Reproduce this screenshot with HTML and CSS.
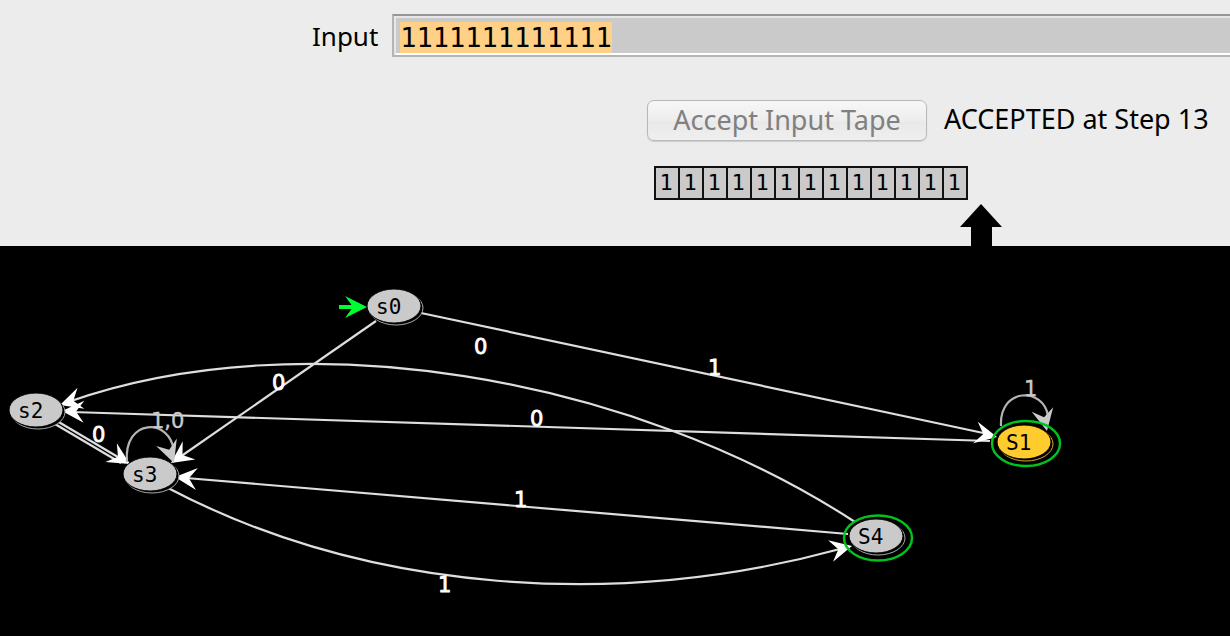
FILE: index.html
```html
<!DOCTYPE html>
<html lang="en">
<head>
<meta charset="utf-8">
<title>Automaton simulator</title>
<link rel="stylesheet" href="styles.css">
</head>
<body>
<main class="app">
  <section class="controls">
    <div class="input-row">
      <label for="tape-input">Input</label>
      <input id="tape-input" class="tape-input" type="text" value="1111111111111" spellcheck="false" autocomplete="off">
    </div>
    <div class="action-row">
      <button class="accept" type="button" disabled>Accept Input Tape</button>
      <output class="status" for="tape-input">ACCEPTED at Step 13</output>
    </div>
    <div class="tape-row">
      <ol class="tape">
        <li>1</li><li>1</li><li>1</li><li>1</li><li>1</li><li>1</li><li>1</li><li>1</li><li>1</li><li>1</li><li>1</li><li>1</li><li>1</li>
      </ol>
      <svg class="head" width="42" height="42" viewBox="0 0 42 42" aria-hidden="true"><path d="M21 0 42 23H32V42H11V23H0Z"/></svg>
    </div>
  </section>
  <section class="canvas">
    <svg class="graph" width="1230" height="390" viewBox="0 246 1230 390" role="img" aria-label="State diagram">
      <defs>
        <path id="tip" d="M0 0 L-22 -11 L-14 0 L-22 11 Z"/>
      </defs>
      <g class="edge">
        <path d="M421 313 988 434"/>
        <path d="M376 321 180 457"/>
        <path d="M990 441 72 412"/>
        <path d="M848 534 186 478"/>
        <path d="M855 522C630 375 300 320 68 402"/>
        <path d="M168 488C370 594 620 609 840 549"/>
        <path d="M57 421 123 460"/>
        <path d="M55 424 121 463"/>
      </g>
      <g class="tips">
        <use href="#tip" transform="translate(997 437) rotate(12)"/>
        <use href="#tip" transform="translate(171 463) rotate(145)"/>
        <use href="#tip" transform="translate(62 411) rotate(182)"/>
        <use href="#tip" transform="translate(175 477) rotate(185)"/>
        <use href="#tip" transform="translate(60 405) rotate(162)"/>
        <use href="#tip" transform="translate(852 546) rotate(-13)"/>
        <use href="#tip" transform="translate(130 464) rotate(31)"/>
        <use class="start" href="#tip" transform="translate(367 307)"/>
      </g>
      <path class="start-line" d="M339 307H354"/>
      <g class="loop">
        <path d="M127 462C123 418 171 417 174 452"/>
        <path d="M1001 426C999 387 1044 387 1048 416"/>
      </g>
      <g class="loop-tips">
        <use href="#tip" transform="translate(174 463) rotate(70)"/>
        <use href="#tip" transform="translate(1047 431) rotate(78)"/>
      </g>
      <g class="shadow">
        <ellipse cx="396" cy="308" rx="27" ry="17"/>
        <ellipse cx="38" cy="412" rx="27" ry="17"/>
        <ellipse cx="152" cy="476" rx="27" ry="17"/>
        <ellipse cx="878" cy="538" rx="27" ry="17"/>
        <ellipse class="gold-ring" cx="1026" cy="444" rx="27" ry="17"/>
      </g>
      <g class="accepting">
        <ellipse cx="1026" cy="443.5" rx="34" ry="22.5"/>
        <ellipse cx="878" cy="538" rx="34" ry="22.5"/>
      </g>
      <g class="state">
        <ellipse cx="394" cy="306" rx="27" ry="17"/>
        <ellipse cx="36" cy="410" rx="27" ry="17"/>
        <ellipse cx="150" cy="474" rx="27" ry="17"/>
        <ellipse cx="876" cy="536" rx="27" ry="17"/>
        <ellipse class="current" cx="1024" cy="442" rx="27" ry="17"/>
      </g>
      <g class="name">
        <text x="376" y="314">s0</text>
        <text x="18" y="418">s2</text>
        <text x="132" y="482">s3</text>
        <text x="858" y="544">S4</text>
        <text x="1006" y="450">S1</text>
      </g>
      <g class="symbol">
        <text x="474" y="354">0</text>
        <text x="708" y="375">1</text>
        <text x="272" y="390">0</text>
        <text x="530" y="426">0</text>
        <text x="92" y="442">0</text>
        <text x="514" y="507">1</text>
        <text x="438" y="592">1</text>
        <text class="dim" x="151" y="428">1,0</text>
        <text class="dim" x="1024" y="396">1</text>
      </g>
    </svg>
  </section>
</main>
<script src="app.js"></script>
</body>
</html>
```
FILE: styles.css
```css
* { box-sizing: border-box; }

body {
  margin: 0;
  background: #000;
  color: #000;
  font-family: "Noto Sans", "Open Sans", sans-serif;
  font-size: 27px;
}

.app {
  display: flex;
  flex-direction: column;
  min-height: 100vh;
  overflow: hidden;
}

.controls {
  padding-top: 14px;
  background: #ececec;
}

.input-row {
  display: flex;
  align-items: center;
  gap: 14px;
  padding-left: 312px;
}

.input-row label { font-size: 26px; }

.tape-input {
  flex: 1;
  min-width: 0;
  height: 43px;
  padding: 4px 0 0 6px;
  border: 2px solid #b4b4b4;
  border-top-color: #969696;
  border-right: 0;
  border-radius: 0;
  outline: 0;
  background: #cacaca;
  box-shadow: inset 2px 2px #e6e6e6, inset 0 -2px #fff;
  font: 27px "DejaVu Sans Mono", monospace;
  color: #000;
}

.tape-input::selection {
  background: #ffd086;
  color: #000;
}

.action-row {
  display: flex;
  align-items: center;
  gap: 17px;
  padding: 43px 0 0 647px;
  white-space: nowrap;
}

.accept {
  width: 280px;
  height: 41px;
  padding: 0 0 2px;
  border: 1px solid #b8b8b8;
  border-radius: 7px;
  background: linear-gradient(#f7f7f7, #ededed 50%, #e9e9e9 55%, #efefef);
  box-shadow: 0 1px 1px #ccc;
  color: #808080;
  font: inherit;
}

.status {
  padding-bottom: 4px;
  line-height: 36px;
}

.tape-row {
  display: flex;
  align-items: flex-start;
  padding: 25px 0 0 654px;
}

.tape {
  display: flex;
  margin: 0;
  padding: 0;
  border: 2px solid #111;
  list-style: none;
  background: #cacaca;
  font: 22px/30px "DejaVu Sans Mono", monospace;
}

.tape li {
  width: 24px;
  padding-right: 2px;
  border-right: 2px solid #111;
  text-align: center;
}

.tape li:last-child {
  width: 22px;
  border-right: 0;
}

.head { margin: 38px 0 0 -8px; }

.canvas {
  flex: 1;
  background: #000;
}

.graph { display: block; }

.edge path { fill: none; stroke: #dedede; stroke-width: 2.2; }
.tips { fill: #fff; }
.start { fill: #00ff30; }
.start-line { stroke: #00ff30; stroke-width: 4; }
.loop path { fill: none; stroke: #b4b4b4; stroke-width: 2.2; }
.loop-tips { fill: #cacaca; }
.shadow ellipse { fill: #000; stroke: #aaa; stroke-width: 1; }
.shadow .gold-ring { stroke: #d9a72a; }
.accepting ellipse { fill: none; stroke: #00c41e; stroke-width: 2.4; }
.state ellipse { fill: #cacaca; stroke: #000; stroke-width: 1; }
.state .current { fill: #ffcb2d; }
.name { font: 21px "DejaVu Sans Mono", monospace; fill: #000; }

.symbol {
  font: 21px "DejaVu Sans", sans-serif;
  fill: #fff;
  stroke: #fff;
  stroke-width: 0.8;
}

.symbol .dim { fill: #cacaca; stroke: #cacaca; stroke-width: 0.4; }
```
FILE: app.js
```js
const tapeInput = document.getElementById("tape-input");
tapeInput.focus();
tapeInput.select();
```
